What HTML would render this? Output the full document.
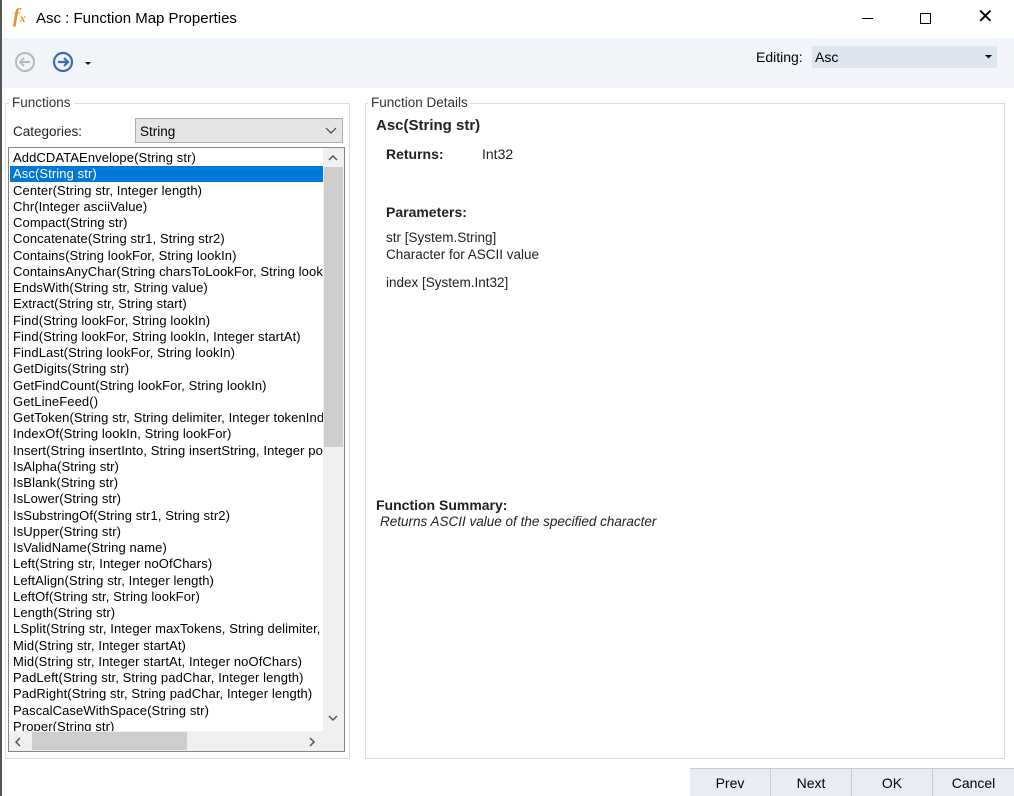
<!DOCTYPE html>
<html><head><style>
*{margin:0;padding:0;box-sizing:border-box}
body{width:1014px;height:796px;background:#fff;font-family:"Liberation Sans",sans-serif;position:relative;overflow:hidden;color:#000}
.a{position:absolute;white-space:nowrap}
.f{font-size:13px;letter-spacing:0.1px}
</style></head><body>
<div class="a" style="left:0;top:0;width:2px;height:796px;background:#555"></div>
<!-- title -->
<div class="a" style="left:13px;top:5px;font:italic bold 20px 'Liberation Serif',serif;color:#e8912a">f<span style="font-size:12px">x</span></div>
<div class="a" style="left:36px;top:10px;font-size:15px;color:#000">Asc : Function Map Properties</div>
<div class="a" style="left:862px;top:18px;width:11px;height:1px;background:#000"></div>
<div class="a" style="left:920px;top:13px;width:11px;height:11px;border:1px solid #000"></div>
<div class="a" style="left:977px;top:4px;font-size:20px;font-weight:300">✕</div>
<!-- toolbar -->
<div class="a" style="left:2px;top:38px;width:1012px;height:50px;background:#f1f5f9"></div>
<svg class="a" style="left:14px;top:51px" width="90" height="24">
<circle cx="11" cy="11" r="9" fill="none" stroke="#b9b9b9" stroke-width="2"/>
<path d="M16 11H7M10 7L6 11L10 15" fill="none" stroke="#b9b9b9" stroke-width="2"/>
<circle cx="49" cy="11" r="9" fill="none" stroke="#3c6bb0" stroke-width="2.2"/>
<path d="M44 11H53M50 7L54 11L50 15" fill="none" stroke="#3c6bb0" stroke-width="2.2"/>
<path d="M71 11H77L74 14Z" fill="#000"/>
</svg>
<div class="a" style="left:756px;top:49px;font-size:14px">Editing:</div>
<div class="a" style="left:812px;top:46px;width:185px;height:22px;background:#dde6ef"></div>
<div class="a" style="left:815px;top:49px;font-size:14px">Asc</div>
<svg class="a" style="left:985px;top:54px" width="8" height="6"><path d="M0 1H7L3.5 4.5Z" fill="#000"/></svg>
<!-- functions group -->
<div class="a" style="left:5px;top:103px;width:345px;height:656px;border:1px solid #dcdcdc"></div>
<div class="a" style="left:9px;top:95px;background:#fff;padding:0 3px;font-size:13.5px;color:#333">Functions</div>
<div class="a" style="left:13px;top:124px;font-size:13.5px;color:#222">Categories:</div>
<div class="a" style="left:135px;top:118px;width:208px;height:25px;background:#e5e5e5;border:1px solid #adadad"></div>
<div class="a" style="left:140px;top:124px;font-size:13.5px">String</div>
<svg class="a" style="left:325px;top:127px" width="12" height="8"><path d="M1 1L6 6L11 1" fill="none" stroke="#444" stroke-width="1.2"/></svg>
<div class="a" style="left:8px;top:147px;width:337px;height:605px;border:1px solid #828790;background:#fff;overflow:hidden">
<div class="a" style="left:1px;top:18px;width:313px;height:16px;background:#0078d7"></div>
<div class="a f" style="left:4px;top:2px;line-height:16.25px;white-space:pre">AddCDATAEnvelope(String str)
<span style="color:#fff">Asc(String str)</span>
Center(String str, Integer length)
Chr(Integer asciiValue)
Compact(String str)
Concatenate(String str1, String str2)
Contains(String lookFor, String lookIn)
ContainsAnyChar(String charsToLookFor, String lookIn)
EndsWith(String str, String value)
Extract(String str, String start)
Find(String lookFor, String lookIn)
Find(String lookFor, String lookIn, Integer startAt)
FindLast(String lookFor, String lookIn)
GetDigits(String str)
GetFindCount(String lookFor, String lookIn)
GetLineFeed()
GetToken(String str, String delimiter, Integer tokenIndex)
IndexOf(String lookIn, String lookFor)
Insert(String insertInto, String insertString, Integer position)
IsAlpha(String str)
IsBlank(String str)
IsLower(String str)
IsSubstringOf(String str1, String str2)
IsUpper(String str)
IsValidName(String name)
Left(String str, Integer noOfChars)
LeftAlign(String str, Integer length)
LeftOf(String str, String lookFor)
Length(String str)
LSplit(String str, Integer maxTokens, String delimiter, Integer)
Mid(String str, Integer startAt)
Mid(String str, Integer startAt, Integer noOfChars)
PadLeft(String str, String padChar, Integer length)
PadRight(String str, String padChar, Integer length)
PascalCaseWithSpace(String str)
Proper(String str)</div>
<div class="a" style="left:314px;top:0;width:21px;height:583px;background:#f0f0f0"></div>
<div class="a" style="left:315px;top:19px;width:19px;height:280px;background:#cdcdcd"></div>
<svg class="a" style="left:318px;top:6px" width="12" height="8"><path d="M2 6L6 2L10 6" fill="none" stroke="#555" stroke-width="1.5"/></svg>
<svg class="a" style="left:318px;top:566px" width="12" height="8"><path d="M2 2L6 6L10 2" fill="none" stroke="#555" stroke-width="1.5"/></svg>
<div class="a" style="left:0;top:583px;width:335px;height:20px;background:#f0f0f0"></div>
<div class="a" style="left:23px;top:584px;width:155px;height:18px;background:#cdcdcd"></div>
<svg class="a" style="left:5px;top:588px" width="8" height="12"><path d="M6 2L2 6L6 10" fill="none" stroke="#555" stroke-width="1.5"/></svg>
<svg class="a" style="left:299px;top:588px" width="8" height="12"><path d="M2 2L6 6L2 10" fill="none" stroke="#555" stroke-width="1.5"/></svg>
</div>
<!-- details -->
<div class="a" style="left:365px;top:103px;width:640px;height:656px;border:1px solid #dcdcdc"></div>
<div class="a" style="left:368px;top:95px;background:#fff;padding:0 3px;font-size:13.5px;color:#333">Function Details</div>
<div class="a" style="left:376px;top:117px;font-size:15px;font-weight:bold;color:#222">Asc(String str)</div>
<div class="a" style="left:386px;top:146px;font-size:14px;font-weight:bold;color:#222">Returns:</div>
<div class="a" style="left:482px;top:146px;font-size:14px;color:#222">Int32</div>
<div class="a" style="left:386px;top:204px;font-size:14px;font-weight:bold;color:#222">Parameters:</div>
<div class="a" style="left:386px;top:229px;font-size:13.5px;color:#222;line-height:17px">str [System.String]<br>Character for ASCII value</div>
<div class="a" style="left:386px;top:275px;font-size:13.5px;color:#222">index [System.Int32]</div>
<div class="a" style="left:376px;top:497px;font-size:14px;font-weight:bold;color:#222">Function Summary:</div>
<div class="a" style="left:380px;top:514px;font-size:13.5px;font-style:italic;color:#222">Returns ASCII value of the specified character</div>
<!-- buttons -->
<div class="a" style="left:690px;top:768px;width:324px;height:28px;background:#e8edf3"></div>
<div class="a" style="left:770px;top:768px;width:1px;height:28px;background:#c9ced5"></div>
<div class="a" style="left:851px;top:768px;width:1px;height:28px;background:#c9ced5"></div>
<div class="a" style="left:932px;top:768px;width:1px;height:28px;background:#c9ced5"></div>
<div class="a" style="left:690px;top:768px;width:324px;height:1px;background:#c9ced5"></div>
<div class="a" style="left:690px;top:775px;width:80px;text-align:center;font-size:14px">Prev</div>
<div class="a" style="left:771px;top:775px;width:80px;text-align:center;font-size:14px">Next</div>
<div class="a" style="left:852px;top:775px;width:80px;text-align:center;font-size:14px">OK</div>
<div class="a" style="left:933px;top:775px;width:81px;text-align:center;font-size:14px">Cancel</div>
</body></html>
